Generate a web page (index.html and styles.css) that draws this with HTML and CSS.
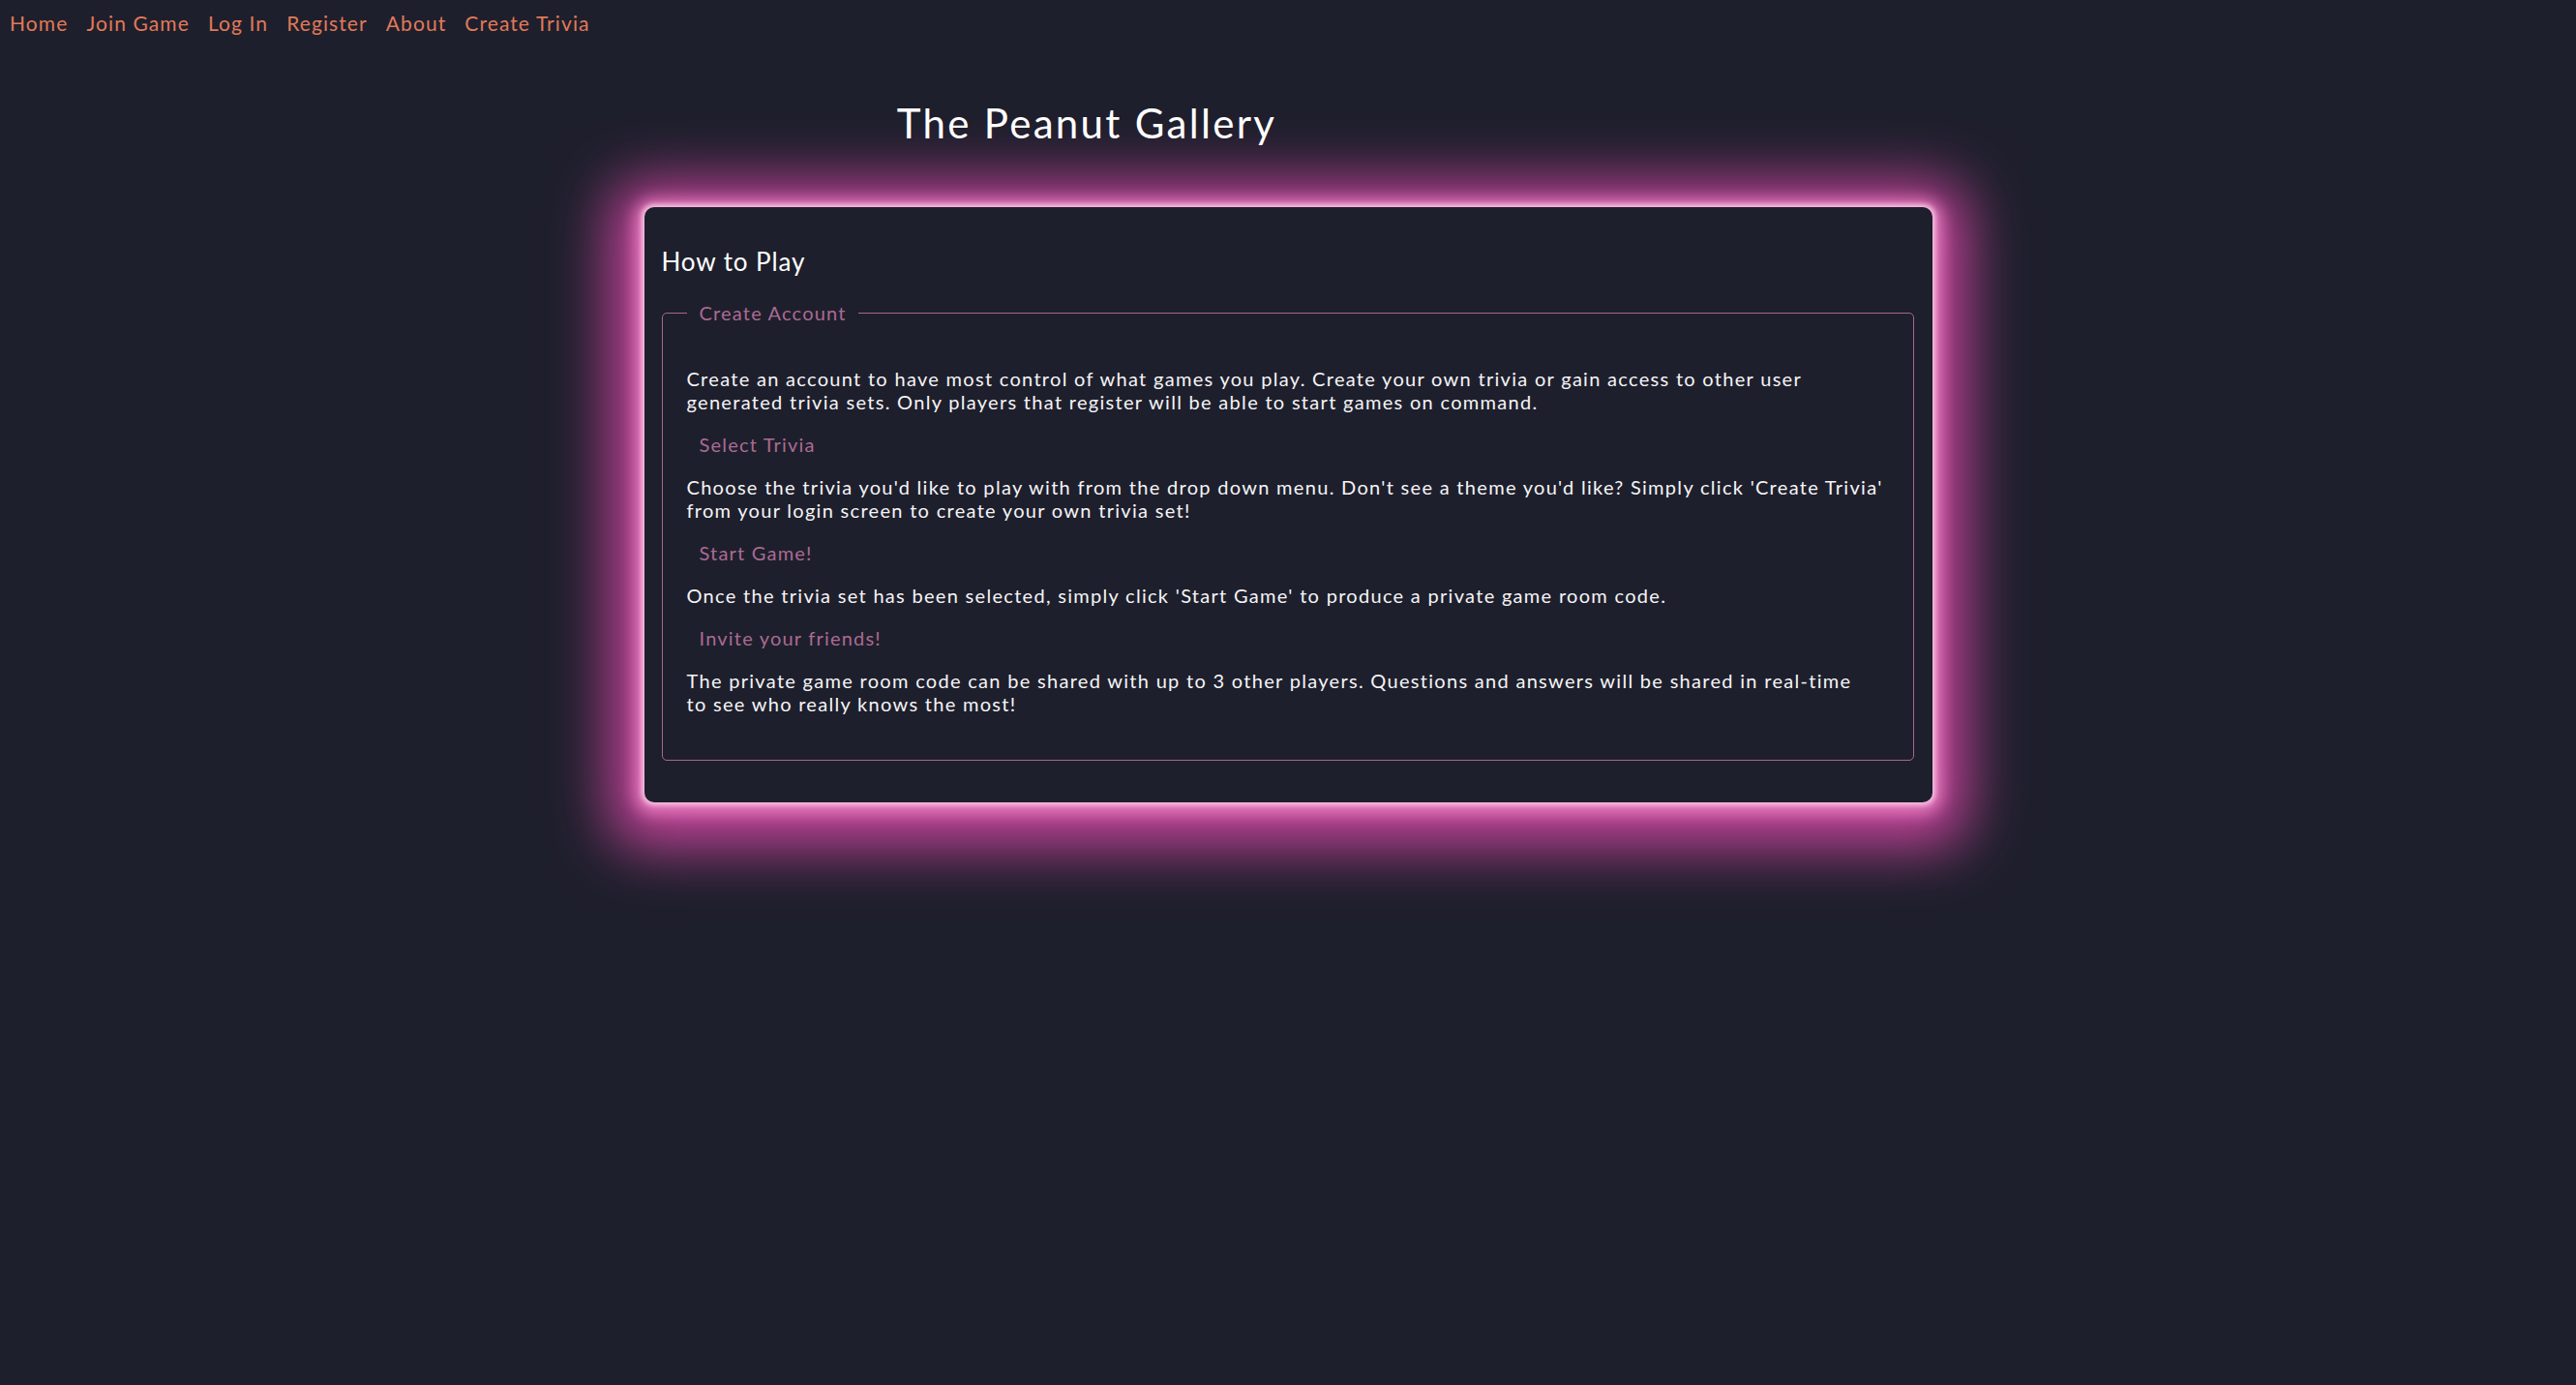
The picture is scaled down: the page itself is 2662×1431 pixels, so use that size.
FILE: index.html
```html
<!DOCTYPE html>
<html lang="en">
<head>
<meta charset="utf-8">
<title>The Peanut Gallery</title>
<link rel="stylesheet" href="styles.css">
</head>
<body>
  <nav class="topnav">
    <a class="navlink" href="#">Home</a>
    <a class="navlink" href="#">Join Game</a>
    <a class="navlink" href="#">Log In</a>
    <a class="navlink" href="#">Register</a>
    <a class="navlink" href="#">About</a>
    <a class="navlink" href="#">Create Trivia</a>
  </nav>
  <header class="masthead">
    <h1 class="site-title">The Peanut Gallery</h1>
  </header>
  <main class="card">
    <h2 class="card-title">How to Play</h2>
    <fieldset class="steps">
      <legend class="step-head">Create Account</legend>
      <p class="step-text">Create an account to have most control of what games you play. Create your own trivia or gain access to other user generated trivia sets. Only players that register will be able to start games on command.</p>
      <h3 class="step-head sub">Select Trivia</h3>
      <p class="step-text">Choose the trivia you'd like to play with from the drop down menu. Don't see a theme you'd like? Simply click 'Create Trivia' from your login screen to create your own trivia set!</p>
      <h3 class="step-head sub">Start Game!</h3>
      <p class="step-text">Once the trivia set has been selected, simply click 'Start Game' to produce a private game room code.</p>
      <h3 class="step-head sub">Invite your friends!</h3>
      <p class="step-text">The private game room code can be shared with up to 3 other players. Questions and answers will be shared in real-time<br>to see who really knows the most!</p>
    </fieldset>
  </main>
</body>
</html>
```

FILE: styles.css
```css
html, body {
  margin: 0;
  padding: 0;
}

body {
  background: #1e1f2c;
  color: #f2f2f4;
  font-family: Lato, "Open Sans", "Noto Sans", sans-serif;
  min-height: 1431px;
}

.topnav {
  display: flex;
  gap: 19px;
  padding: 12px 10px 0;
}

.navlink {
  color: #e07a59;
  text-decoration: none;
  font-size: 21px;
  line-height: 24px;
  letter-spacing: 1.1px;
}

.masthead {
  width: 2246px;
  text-align: center;
  padding-top: 66px;
}

.site-title {
  margin: 0;
  font-size: 42px;
  line-height: 50px;
  font-weight: 400;
  letter-spacing: 2.3px;
  color: #ffffff;
}

.card {
  width: 1331px;
  box-sizing: border-box;
  margin: 62px auto 0;
  padding: 40px 19px 43px 18px;
  background: #1e1f2c;
  border-radius: 10px;
  box-shadow:
    0 0 5px 3px #f6c0e0,
    0 2px 16px 10px rgba(236, 130, 196, 0.85),
    0 10px 60px 36px #c4449a;
}

.card-title {
  margin: 0 0 25px;
  font-size: 26px;
  line-height: 32px;
  font-weight: 400;
  letter-spacing: 0.9px;
  color: #ffffff;
}

.steps {
  margin: 0;
  padding: 44px 25px 46px;
  border: 1px solid #a6678f;
  border-radius: 5px;
}

.step-head {
  margin: 20px 0;
  padding: 0 12px 0 13px;
  font-size: 20px;
  line-height: 24px;
  font-weight: 400;
  letter-spacing: 1.2px;
  color: #aa6b93;
}

legend.step-head {
  margin: 0;
}

.step-text {
  margin: 0;
  font-size: 20px;
  line-height: 24px;
  letter-spacing: 1.3px;
  color: #f4f4f6;
}
```
